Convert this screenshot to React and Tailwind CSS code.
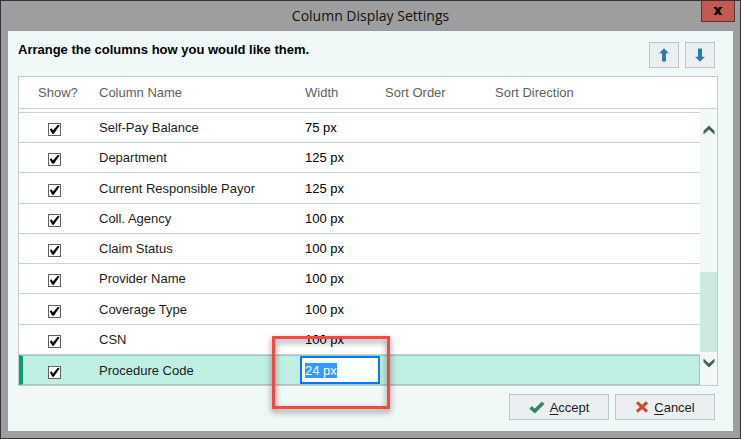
import { useEffect, useRef } from "react";

const rows = [
  { name: "Self-Pay Balance", width: "75 px" },
  { name: "Department", width: "125 px" },
  { name: "Current Responsible Payor", width: "125 px" },
  { name: "Coll. Agency", width: "100 px" },
  { name: "Claim Status", width: "100 px" },
  { name: "Provider Name", width: "100 px" },
  { name: "Coverage Type", width: "100 px" },
  { name: "CSN", width: "100 px" },
];

function CheckBox({ label }) {
  return (
    <span className="mt-1 grid size-[13px]">
      <input
        type="checkbox"
        defaultChecked
        aria-label={label}
        className="peer col-start-1 row-start-1 size-[13px] appearance-none border border-[#606060] bg-white"
      />
      <svg
        viewBox="0 0 13 13"
        className="pointer-events-none invisible col-start-1 row-start-1 size-[13px] peer-checked:visible"
        aria-hidden="true"
      >
        <path d="M1.8 6.4 3.4 5.2 5 7.4 9.8 1.8 11.6 2.6 5.8 10.8 4.4 10.8Z" fill="#000" />
      </svg>
    </span>
  );
}

function MoveButton({ label, down }) {
  return (
    <button
      type="button"
      aria-label={label}
      className="flex h-[26px] w-[30px] items-center justify-center border border-[#bfc4c9] bg-[#ebeff2]"
    >
      <svg viewBox="0 0 10 14" className={down ? "h-[14px] w-[10px] rotate-180" : "h-[14px] w-[10px]"} aria-hidden="true">
        <path d="M5 .3 9.9 5.2H7V13.4H3V5.2H.1Z" fill="#2b7da9" />
      </svg>
    </button>
  );
}

function ActionButton({ first, rest, children }) {
  return (
    <button
      type="button"
      className="flex h-[26px] w-[100px] items-center justify-center gap-[5px] border border-[#bfc4c9] bg-[#ebeff2] text-[13px] leading-[15px] text-[#1c1c1c]"
    >
      {children}
      <span>
        <span className="underline underline-offset-2">{first}</span>
        {rest}
      </span>
    </button>
  );
}

function Chevron({ down }) {
  return (
    <svg viewBox="0 0 12 10" className={down ? "h-[10px] w-[12px] rotate-180" : "h-[10px] w-[12px]"} aria-hidden="true">
      <path d="M6 .6 11.5 6V9.4L6 4.4.5 9.4V6Z" fill="#445f57" />
    </svg>
  );
}

export default function App() {
  const widthField = useRef(null);

  useEffect(() => {
    widthField.current.focus();
    widthField.current.select();
  }, []);

  return (
    <div className="flex min-h-screen flex-col border border-[#34323a] bg-[#9e9e9e] pb-[7px] font-['Liberation_Sans',Arial,sans-serif] text-[13px] leading-[15px]">
      <header className="grid h-[29px] grid-cols-[1fr_auto_1fr] items-center px-[5px]">
        <h1 className="col-start-2 font-['Open_Sans','Segoe_UI',sans-serif] text-[14px] leading-[20px] text-[#111]">
          Column Display Settings
        </h1>
        <button
          type="button"
          aria-label="Close"
          className="flex h-[21px] w-[34px] items-center justify-center self-start justify-self-end border border-t-0 border-[#5c3532] bg-[#c35a50]"
        >
          <svg viewBox="0 0 10 8" className="h-[8px] w-[10px]" aria-hidden="true">
            <path d="M.5 0H3.6L5 2 6.4 0H9.5L6.6 4 9.5 8H6.4L5 6 3.6 8H.5L3.4 4Z" fill="#000" />
          </svg>
        </button>
      </header>

      <main className="mx-[7px] flex flex-1 flex-col border-t border-[#8f9bb0] bg-[#f0f9f7] pr-[15px] pb-[11px] pl-[10px]">
        <div className="flex h-[45px] items-start justify-between pt-[11px] pr-[3px]">
          <h2 className="font-bold text-black">Arrange the columns how you would like them.</h2>
          <div className="flex gap-[6px]">
            <MoveButton label="Move up" />
            <MoveButton label="Move down" down />
          </div>
        </div>

        <div className="flex border border-[#c6cccc] bg-white">
          <table className="min-w-0 flex-1 table-fixed border-separate border-spacing-0 text-left">
            <colgroup>
              <col className="w-[75px]" />
              <col className="w-[206px]" />
              <col className="w-[80px]" />
              <col className="w-[110px]" />
              <col />
            </colgroup>
            <thead className="text-[#5f5f5f]">
              <tr className="h-8 [&>th]:border-b [&>th]:border-[#ccd1d2] [&>th]:font-normal">
                <th scope="col" className="pl-[19px]">Show?</th>
                <th scope="col" className="pl-[5px]">Column Name</th>
                <th scope="col" className="pl-[5px]">Width</th>
                <th scope="col" className="pl-[5px]">Sort Order</th>
                <th scope="col" className="pl-[5px]">Sort Direction</th>
              </tr>
            </thead>
            <tbody className="text-[#1c1c1c]">
              <tr className="h-1">
                <td colSpan={5} className="border-b border-[#ccd1d2]" />
              </tr>
              {rows.map((row) => (
                <tr key={row.name} className="h-[30px] nth-[4n]:h-[31px] [&>td]:border-b [&>td]:border-[#ccd1d2]">
                  <td className="pl-[29px]">
                    <CheckBox label={"Show " + row.name} />
                  </td>
                  <td className="pl-[5px]">{row.name}</td>
                  <td className="pl-[5px] text-black">{row.width}</td>
                  <td />
                  <td />
                </tr>
              ))}
              <tr className="h-[30px] bg-[#bfeee2] [&>td]:border-y [&>td]:border-[#9fc9be]">
                <td className="border-l-4 border-l-[#04a077]! pl-[25px]">
                  <CheckBox label="Show Procedure Code" />
                </td>
                <td className="pl-[5px]">Procedure Code</td>
                <td className="relative p-0">
                  <input
                    ref={widthField}
                    type="text"
                    aria-label="Procedure Code width"
                    defaultValue="24 px"
                    className="block h-7 w-full border-2 border-[#0078ff] bg-white px-[3px] text-black outline-none selection:bg-[#3399ff] selection:text-white"
                  />
                  <div className="pointer-events-none absolute -top-5 -left-7 h-[73px] w-[118px] border-3 border-[#fb4444] drop-shadow-[0_3px_3px_rgba(0,0,0,0.5)]" />
                </td>
                <td />
                <td className="border-r" />
              </tr>
            </tbody>
          </table>

          <div className="flex w-[17px] flex-col">
            <div className="h-8 border-b border-[#ccd1d2]" />
            <div className="flex flex-1 flex-col bg-[#f0f9f7]">
              <button type="button" aria-label="Scroll up" className="flex h-[42px] items-center justify-center">
                <Chevron />
              </button>
              <div className="flex flex-1 flex-col justify-end">
                <div className="h-20 bg-[#cceae2]" />
              </div>
              <button type="button" aria-label="Scroll down" className="flex h-[33px] justify-center pt-[6px]">
                <Chevron down />
              </button>
            </div>
          </div>
        </div>

        <div className="flex justify-end gap-[6px] pt-2 pr-[3px]">
          <ActionButton first="A" rest="ccept">
            <svg viewBox="0 0 16 14" className="h-[14px] w-[16px]" aria-hidden="true">
              <path d="M1.6 7.4 5.8 11 14.2 2.8" fill="none" stroke="#37855f" strokeWidth="3.6" />
            </svg>
          </ActionButton>
          <ActionButton first="C" rest="ancel">
            <svg viewBox="0 0 14 14" className="h-[14px] w-[14px]" aria-hidden="true">
              <path d="M2 2.4 12 11.6M12 2.4 2 11.6" stroke="#c84f32" strokeWidth="3.2" />
            </svg>
          </ActionButton>
        </div>
      </main>
    </div>
  );
}
